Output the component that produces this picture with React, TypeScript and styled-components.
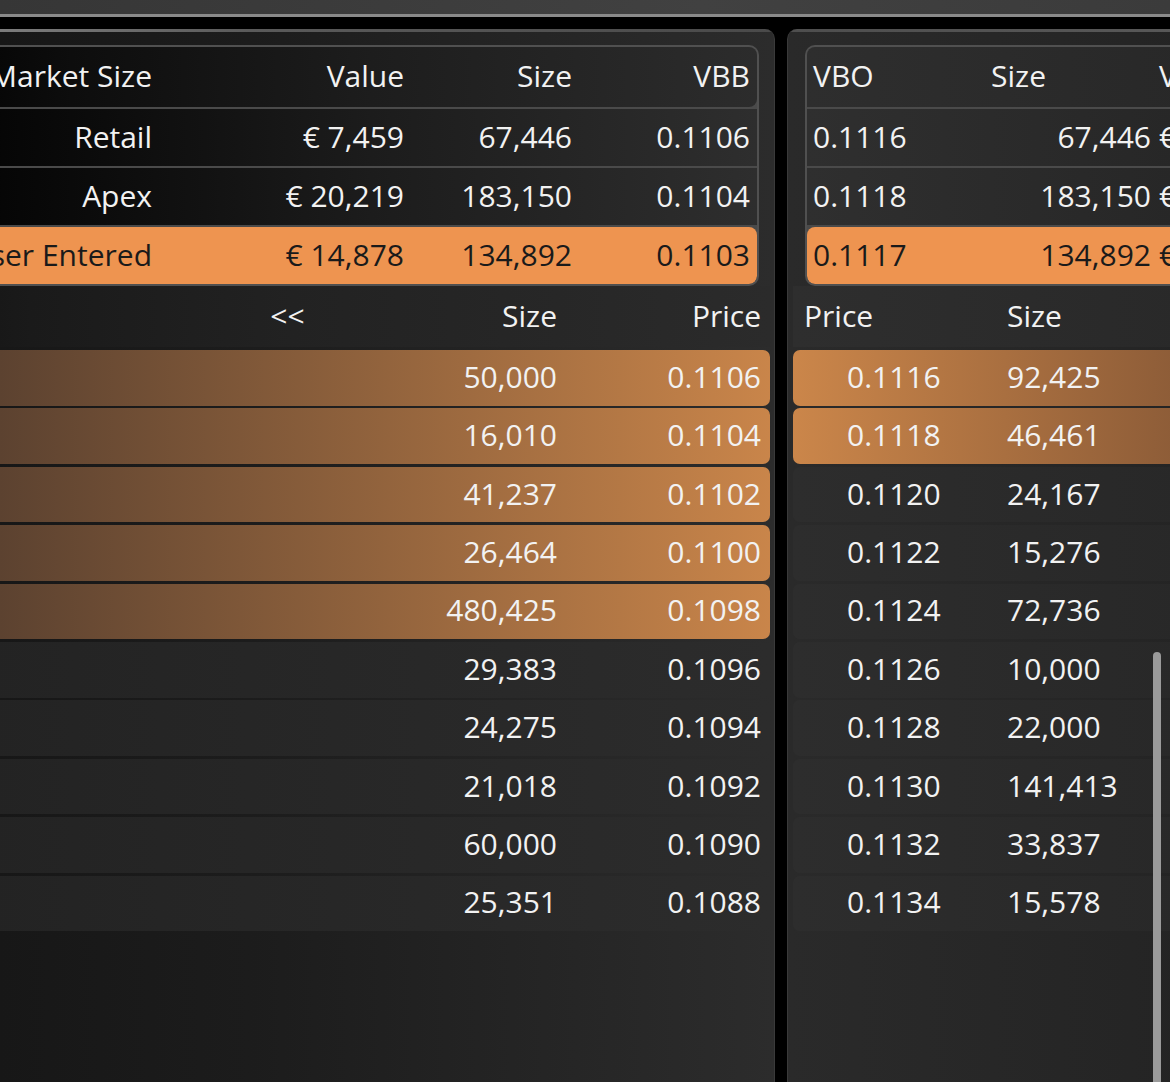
import React from 'react'
import styled, { createGlobalStyle, css } from 'styled-components'

type Side = 'left' | 'right'
type Tone = 'head' | 'plain' | 'hot'
type Align = 'left' | 'center' | 'right'

const GlobalStyle = createGlobalStyle`
    *, *::before, *::after { box-sizing: border-box; }
    html, body {
        margin: 0;
        padding: 0;
        background: #000;
        overflow: hidden;
    }
    body {
        font-family: "Open Sans", "Noto Sans", "DejaVu Sans", sans-serif;
        color: #f2f2f2;
    }
`

const Page = styled.div`
    width: 1170px;
    height: 1082px;
    overflow: hidden;
    background: #000;
    display: flex;
    flex-direction: column;
`

const TopBar = styled.div`
    flex: none;
    height: 17px;
    background: linear-gradient(90deg, #363636, #414141 60%, #3b3b3b);
    border-bottom: 3px solid #8a8a8a;
`

const Stage = styled.div`
    flex: 1;
    min-height: 0;
    display: flex;
    gap: 12px;
    padding-top: 12px;
`

const Panel = styled.section<{ $side: Side }>`
    position: relative;
    flex: none;
    display: flex;
    flex-direction: column;
    padding-top: 16px;
    ${p => p.$side === 'left' ? css`
        width: 875px;
        margin-left: -100px;
        padding-right: 4px;
        border-radius: 0 10px 0 0;
        border-right: 1px solid #3a3a3a;
        background:
            linear-gradient(90deg, #8a8a8a, #5a5a5a 40%, #4a4a4a) top / 100% 3px no-repeat,
            linear-gradient(90deg, #151515 0%, #1c1c1c 40%, #2c2c2c 100%);
    ` : css`
        width: 480px;
        padding-left: 5px;
        border-radius: 10px 0 0 0;
        border-left: 1px solid #3a3a3a;
        background:
            linear-gradient(90deg, #4e4e4e, #5a5a5a) top / 100% 3px no-repeat,
            linear-gradient(90deg, #2a2a2a 0%, #232323 100%);
    `}
`

const Summary = styled.div<{ $side: Side }>`
    display: flex;
    flex-direction: column;
    gap: 2px;
    background: #4a4a4a;
    border: 2px solid #505050;
    overflow: hidden;
    ${p => p.$side === 'left' ? css`
        margin-right: 11px;
        border-left: none;
        border-radius: 0 10px 10px 0;
    ` : css`
        margin-left: 12px;
        border-right: none;
        border-radius: 10px 0 0 10px;
    `}
`

const summaryCols = {
    left: '260px 252px 168px 178px',
    right: '120px 226px 1fr',
}

const toneBg = {
    left: {
        head: 'linear-gradient(90deg, #000 0%, #0d0d0d 20%, #1d1d1d 55%, #2c2c2c 100%)',
        plain: 'linear-gradient(90deg, #000 0%, #0a0a0a 20%, #1c1c1c 55%, #2e2e2e 100%)',
        hot: '#ee9450',
    },
    right: {
        head: 'linear-gradient(90deg, #2e2e2e, #272727)',
        plain: 'linear-gradient(90deg, #2f2f2f, #252525)',
        hot: '#ee9450',
    },
}

const SummaryRow = styled.div<{ $side: Side; $tone: Tone }>`
    display: grid;
    grid-template-columns: ${p => summaryCols[p.$side]};
    height: ${p => p.$tone === 'head' ? 60 : 57}px;
    font-size: 30px;
    background: ${p => toneBg[p.$side][p.$tone]};
    color: ${p => p.$tone === 'hot' ? '#1a1a1a' : '#f2f2f2'};
    ${p => p.$tone === 'head' && p.$side === 'left' && css`
        border-radius: 0 0 8px 0;
    `}
    ${p => p.$tone === 'hot' && css`
        border-radius: ${p.$side === 'left' ? '0 8px 8px 0' : '8px 0 0 8px'};
    `}
`

const Cell = styled.div<{ $align?: Align; $padL?: number; $padR?: number }>`
    display: flex;
    align-items: center;
    white-space: nowrap;
    padding-bottom: 3px;
    justify-content: ${p => p.$align === 'left' ? 'flex-start' : p.$align === 'center' ? 'center' : 'flex-end'};
    padding-left: ${p => p.$padL ?? 0}px;
    padding-right: ${p => p.$padR ?? 0}px;
`

const bookCols = {
    left: '280px 215px 162px 214px',
    right: '214px 1fr',
}

const BookHead = styled.div<{ $side: Side }>`
    display: grid;
    grid-template-columns: ${p => bookCols[p.$side]};
    height: 61px;
    font-size: 30px;
    background: ${p => p.$side === 'left'
        ? 'linear-gradient(90deg, #121212 0%, #1a1a1a 15%, #222 45%, #2b2b2b 100%)'
        : 'linear-gradient(90deg, #2e2e2e, #282828)'};
`

const BookList = styled.div`
    display: flex;
    flex-direction: column;
    gap: 2.8px;
    padding-top: 3px;
`

const rowBg = {
    left: {
        hot: 'linear-gradient(90deg, #4b372a 0%, #5c4230 11.5%, #c9854a 100%)',
        plain: 'linear-gradient(90deg, #222 0%, #262626 40%, #2c2c2c 100%)',
    },
    right: {
        hot: 'linear-gradient(90deg, #cb864a 0%, #8e5d38 80%, #7c5233 100%)',
        plain: 'linear-gradient(90deg, #2d2d2d, #272727)',
    },
}

const BookRow = styled.div<{ $side: Side; $hot: boolean }>`
    display: grid;
    grid-template-columns: ${p => bookCols[p.$side]};
    height: 55.6px;
    font-size: 30px;
    background: ${p => rowBg[p.$side][p.$hot ? 'hot' : 'plain']};
    border-radius: ${p => p.$side === 'left' ? '0 7px 7px 0' : '7px 0 0 7px'};
`

const ScrollThumb = styled.div`
    position: absolute;
    left: 365px;
    top: 623px;
    bottom: 0;
    width: 8px;
    border-radius: 4px 4px 0 0;
    background: #9a9a9a;
`

const leftSummary = [
    { name: 'Retail', value: '€ 7,459', size: '67,446', price: '0.1106', hot: false },
    { name: 'Apex', value: '€ 20,219', size: '183,150', price: '0.1104', hot: false },
    { name: 'User Entered', value: '€ 14,878', size: '134,892', price: '0.1103', hot: true },
]

const rightSummary = [
    { price: '0.1116', size: '67,446', value: '€ 7,459', hot: false },
    { price: '0.1118', size: '183,150', value: '€ 20,219', hot: false },
    { price: '0.1117', size: '134,892', value: '€ 14,878', hot: true },
]

const bids = [
    ['50,000', '0.1106'],
    ['16,010', '0.1104'],
    ['41,237', '0.1102'],
    ['26,464', '0.1100'],
    ['480,425', '0.1098'],
    ['29,383', '0.1096'],
    ['24,275', '0.1094'],
    ['21,018', '0.1092'],
    ['60,000', '0.1090'],
    ['25,351', '0.1088'],
]

const offers = [
    ['0.1116', '92,425'],
    ['0.1118', '46,461'],
    ['0.1120', '24,167'],
    ['0.1122', '15,276'],
    ['0.1124', '72,736'],
    ['0.1126', '10,000'],
    ['0.1128', '22,000'],
    ['0.1130', '141,413'],
    ['0.1132', '33,837'],
    ['0.1134', '15,578'],
]

function BidPanel() {
    return (
        <Panel $side="left">
            <Summary $side="left">
                <SummaryRow $side="left" $tone="head">
                    <Cell $padR={8}>Market Size</Cell>
                    <Cell $padR={8}>Value</Cell>
                    <Cell $padR={8}>Size</Cell>
                    <Cell $padR={8}>VBB</Cell>
                </SummaryRow>
                {leftSummary.map(r => (
                    <SummaryRow key={r.name} $side="left" $tone={r.hot ? 'hot' : 'plain'}>
                        <Cell $padR={8}>{r.name}</Cell>
                        <Cell $padR={8}>{r.value}</Cell>
                        <Cell $padR={8}>{r.size}</Cell>
                        <Cell $padR={8}>{r.price}</Cell>
                    </SummaryRow>
                ))}
            </Summary>
            <BookHead $side="left">
                <Cell />
                <Cell $align="center">&lt;&lt;</Cell>
                <Cell>Size</Cell>
                <Cell $padR={10}>Price</Cell>
            </BookHead>
            <BookList>
                {bids.map(([size, price], i) => (
                    <BookRow key={price} $side="left" $hot={i < 5}>
                        <Cell />
                        <Cell />
                        <Cell>{size}</Cell>
                        <Cell $padR={10}>{price}</Cell>
                    </BookRow>
                ))}
            </BookList>
        </Panel>
    )
}

function OfferPanel() {
    return (
        <Panel $side="right">
            <Summary $side="right">
                <SummaryRow $side="right" $tone="head">
                    <Cell $align="left" $padL={6}>VBO</Cell>
                    <Cell $padR={107}>Size</Cell>
                    <Cell $align="left" $padL={6}>Value</Cell>
                </SummaryRow>
                {rightSummary.map(r => (
                    <SummaryRow key={r.price} $side="right" $tone={r.hot ? 'hot' : 'plain'}>
                        <Cell $align="left" $padL={6}>{r.price}</Cell>
                        <Cell $padR={2}>{r.size}</Cell>
                        <Cell $align="left" $padL={6}>{r.value}</Cell>
                    </SummaryRow>
                ))}
            </Summary>
            <BookHead $side="right">
                <Cell $align="left" $padL={11}>Price</Cell>
                <Cell $align="left">Size</Cell>
            </BookHead>
            <BookList>
                {offers.map(([price, size], i) => (
                    <BookRow key={price} $side="right" $hot={i < 2}>
                        <Cell $align="left" $padL={54}>{price}</Cell>
                        <Cell $align="left">{size}</Cell>
                    </BookRow>
                ))}
            </BookList>
            <ScrollThumb />
        </Panel>
    )
}

export default function App() {
    return (
        <>
            <GlobalStyle />
            <Page>
                <TopBar />
                <Stage>
                    <BidPanel />
                    <OfferPanel />
                </Stage>
            </Page>
        </>
    )
}
